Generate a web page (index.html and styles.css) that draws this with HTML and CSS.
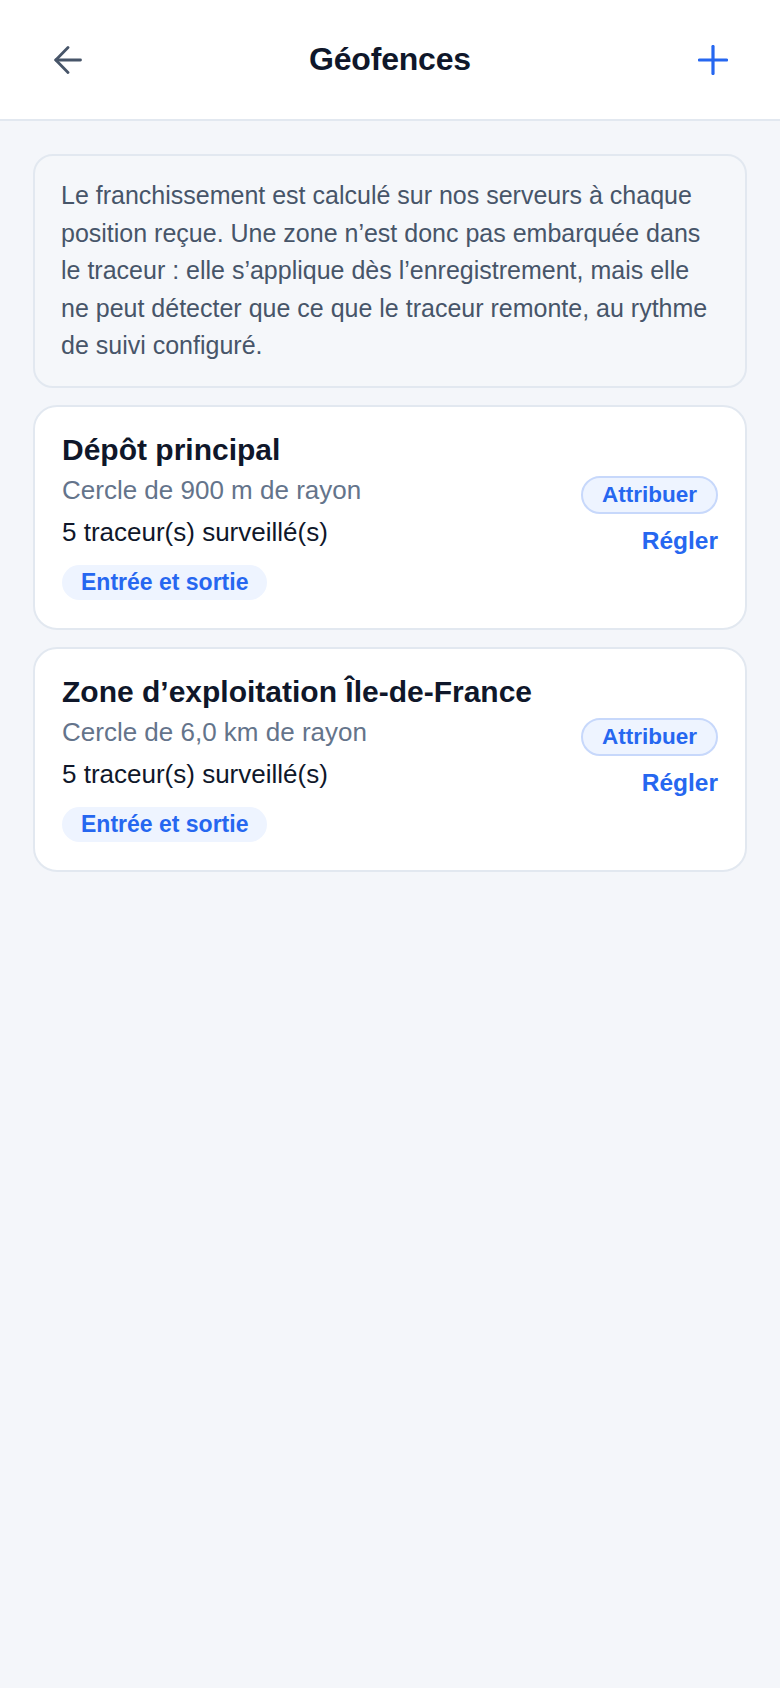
FILE: index.html
```html
<!DOCTYPE html>
<html lang="fr">
<head>
    <meta charset="UTF-8">
    <meta name="viewport" content="width=device-width, initial-scale=1.0">
    <title>Géofences</title>
    <link rel="stylesheet" href="styles.css">
</head>
<body>

<header class="topbar">
    <button class="icon-btn back" aria-label="Retour">
        <svg width="28" height="28" viewBox="0 0 28 28" fill="none" stroke="currentColor" stroke-width="2.8" stroke-linecap="round" stroke-linejoin="round">
            <path d="M26.5 14H1.8"/>
            <path d="M14 1.5L1.8 14L14 26.5"/>
        </svg>
    </button>
    <h1>Géofences</h1>
    <button class="icon-btn add" aria-label="Ajouter">
        <svg width="30" height="30" viewBox="0 0 30 30" fill="none" stroke="currentColor" stroke-width="3.2" stroke-linecap="round">
            <path d="M15 1.5V28.5"/>
            <path d="M1.5 15H28.5"/>
        </svg>
    </button>
</header>

<main class="content">
    <!-- Info notice -->
    <div class="notice">
        Le franchissement est calculé sur nos serveurs à chaque position reçue. Une zone n’est donc pas embarquée dans le traceur : elle s’applique dès l’enregistrement, mais elle ne peut détecter que ce que le traceur remonte, au rythme de suivi configuré.
    </div>

    <!-- Geofence cards -->
    <div class="card">
        <div class="card-info">
            <h2>Dépôt principal</h2>
            <div class="shape">Cercle de 900 m de rayon</div>
            <div class="count">5 traceur(s) surveillé(s)</div>
            <span class="tag">Entrée et sortie</span>
        </div>
        <div class="card-actions">
            <button class="btn-assign">Attribuer</button>
            <button class="btn-link">Régler</button>
        </div>
    </div>

    <div class="card">
        <div class="card-info">
            <h2>Zone d’exploitation Île-de-France</h2>
            <div class="shape">Cercle de 6,0 km de rayon</div>
            <div class="count">5 traceur(s) surveillé(s)</div>
            <span class="tag">Entrée et sortie</span>
        </div>
        <div class="card-actions">
            <button class="btn-assign">Attribuer</button>
            <button class="btn-link">Régler</button>
        </div>
    </div>
</main>

</body>
</html>
```

FILE: styles.css
```css
body {
    font-family: "Liberation Sans", Arial, sans-serif;
    margin: 0;
    padding: 0;
    background-color: #f4f6fa;
    color: #0f172a;
    min-height: 1688px;
}
.topbar {
    display: flex;
    align-items: center;
    justify-content: space-between;
    height: 119px;
    padding: 0 52px 0 54px;
    background-color: #ffffff;
    border-bottom: 2px solid #e2e8f0;
}
.topbar h1 {
    margin: 0;
    font-size: 32px;
    font-weight: bold;
    color: #0f172a;
    letter-spacing: -0.2px;
}
.icon-btn {
    display: flex;
    align-items: center;
    background: none;
    border: none;
    padding: 0;
    cursor: pointer;
}
.icon-btn.back {
    color: #475569;
}
.icon-btn.add {
    color: #2667f0;
}
.content {
    display: flex;
    flex-direction: column;
    gap: 17px;
    padding: 33px 33px;
}
.notice {
    padding: 21px 26px 21px;
    background-color: #f5f7fa;
    border: 2px solid #e2e8f0;
    border-radius: 20px;
    color: #475569;
    font-size: 25px;
    line-height: 37.5px;
}
.card {
    display: flex;
    align-items: center;
    justify-content: space-between;
    padding: 25px 27px 28px;
    background-color: #ffffff;
    border: 2px solid #e2e8f0;
    border-radius: 24px;
}
.card-info {
    display: flex;
    flex-direction: column;
    align-items: flex-start;
}
.card-info h2 {
    margin: 0;
    font-size: 30px;
    line-height: 36px;
    font-weight: bold;
    color: #0f172a;
}
.shape {
    margin-top: 5px;
    font-size: 26px;
    line-height: 34px;
    color: #64748b;
}
.count {
    margin-top: 8px;
    font-size: 26px;
    line-height: 34px;
    color: #0f172a;
}
.tag {
    margin-top: 16px;
    padding: 0 19px;
    height: 35px;
    line-height: 35px;
    border-radius: 18px;
    background-color: #eef4ff;
    color: #2667f0;
    font-size: 23px;
    font-weight: bold;
}
.card-actions {
    display: flex;
    flex-direction: column;
    align-items: flex-end;
    gap: 12px;
}
.btn-assign {
    font-family: inherit;
    height: 38px;
    padding: 0 19px;
    border: 2px solid #c7d8fb;
    border-radius: 19px;
    background-color: #eef4ff;
    color: #2667f0;
    font-size: 22.5px;
    font-weight: bold;
    cursor: pointer;
}
.btn-link {
    font-family: inherit;
    padding: 0;
    border: none;
    background: none;
    color: #2667f0;
    font-size: 24.5px;
    line-height: 30px;
    font-weight: bold;
    cursor: pointer;
}
```
